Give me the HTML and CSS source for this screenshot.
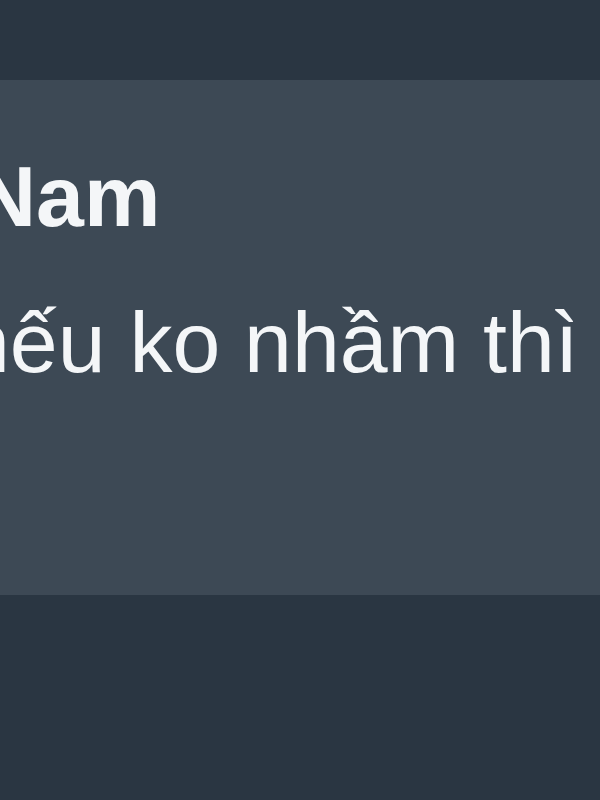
FILE: index.html
```html
<!DOCTYPE html>
<html lang="vi">

<head>
    <meta charset="UTF-8" />
    <meta name="viewport" content="width=device-width, initial-scale=1.0" />
    <title>Tin nhắn</title>
    <link rel="stylesheet" href="styles.css">
</head>

<body>
    <main class="chat">
        <div class="message">
            <p class="sender">Nam</p>
            <p class="text">nếu ko nhầm thì</p>
        </div>
    </main>
</body>

</html>
```

FILE: styles.css
```css
* {
    margin: 0;
    padding: 0;
    box-sizing: border-box;
}

html,
body {
    height: 100%;
}

body {
    font-family: 'Liberation Sans', Arial, sans-serif;
    background-color: #2a3642;
    color: #f4f6f8;
    overflow: hidden;
}

.chat {
    padding-top: 80px;
}

.message {
    height: 515px;
    background-color: #3d4955;
    padding-top: 73px;
    white-space: nowrap;
    overflow: hidden;
}

.sender,
.text {
    font-size: 86px;
    line-height: 1;
    filter: blur(0.6px);
}

.sender {
    font-weight: bold;
    margin-left: -26px;
}

.text {
    margin-top: 60px;
    margin-left: -38px;
}
```
